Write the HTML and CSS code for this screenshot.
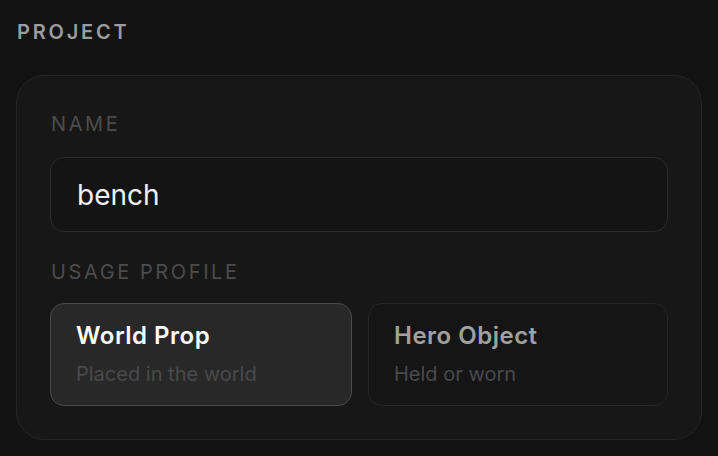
FILE: index.html
```html
<!DOCTYPE html>
<html>
<head>
<meta charset="utf-8">
<link rel="stylesheet" href="styles.css">
</head>
<body>
<div class="page">
  <div class="section-title">PROJECT</div>
  <div class="panel">
    <div class="field-label">NAME</div>
    <div class="input">bench</div>
    <div class="field-label usage">USAGE PROFILE</div>
    <div class="options">
      <div class="option selected">
        <div class="opt-title">World Prop</div>
        <div class="opt-sub">Placed in the world</div>
      </div>
      <div class="option">
        <div class="opt-title">Hero Object</div>
        <div class="opt-sub">Held or worn</div>
      </div>
    </div>
  </div>
</div>
</body>
</html>
```

FILE: styles.css
```css
html, body {
  margin: 0;
  padding: 0;
  background: #121212;
  font-family: Inter, "Noto Sans", sans-serif;
}
.page {
  padding: 20px 16px 0 16px;
}
.section-title {
  font-size: 20px;
  line-height: 24px;
  font-weight: 600;
  letter-spacing: 2.8px;
  color: #9c9c9c;
  padding-left: 1px;
}
.panel {
  margin-top: 31px;
  width: 686px;
  box-sizing: border-box;
  border: 1px solid #262626;
  border-radius: 28px;
  background: #171717;
  padding: 36px 33px 33px 33px;
}
.field-label {
  font-size: 20px;
  line-height: 24px;
  font-weight: 400;
  letter-spacing: 2.6px;
  color: #4c4c4c;
  padding-left: 1px;
}
.input {
  margin-top: 21px;
  height: 75px;
  box-sizing: border-box;
  border: 1px solid #2c2c2c;
  border-radius: 14px;
  background: #141414;
  color: #f2f2f2;
  font-size: 28px;
  display: flex;
  align-items: center;
  padding-left: 26px;
}
.usage {
  margin-top: 28px;
}
.options {
  margin-top: 19px;
  display: grid;
  grid-template-columns: 302px 1fr;
  gap: 16px;
}
.option {
  height: 103px;
  box-sizing: border-box;
  border: 1px solid #262626;
  border-radius: 14px;
  background: #151515;
  padding: 17px 25px 0 25px;
}
.option.selected {
  background: #282828;
  border-color: #4a4a4a;
}
.opt-title {
  font-size: 24px;
  line-height: 29px;
  font-weight: 600;
  letter-spacing: 0.5px;
  color: #a0a0a0;
}
.selected .opt-title {
  color: #fafafa;
}
.opt-sub {
  margin-top: 12px;
  font-size: 20px;
  line-height: 24px;
  color: #4a4a4a;
}
```
